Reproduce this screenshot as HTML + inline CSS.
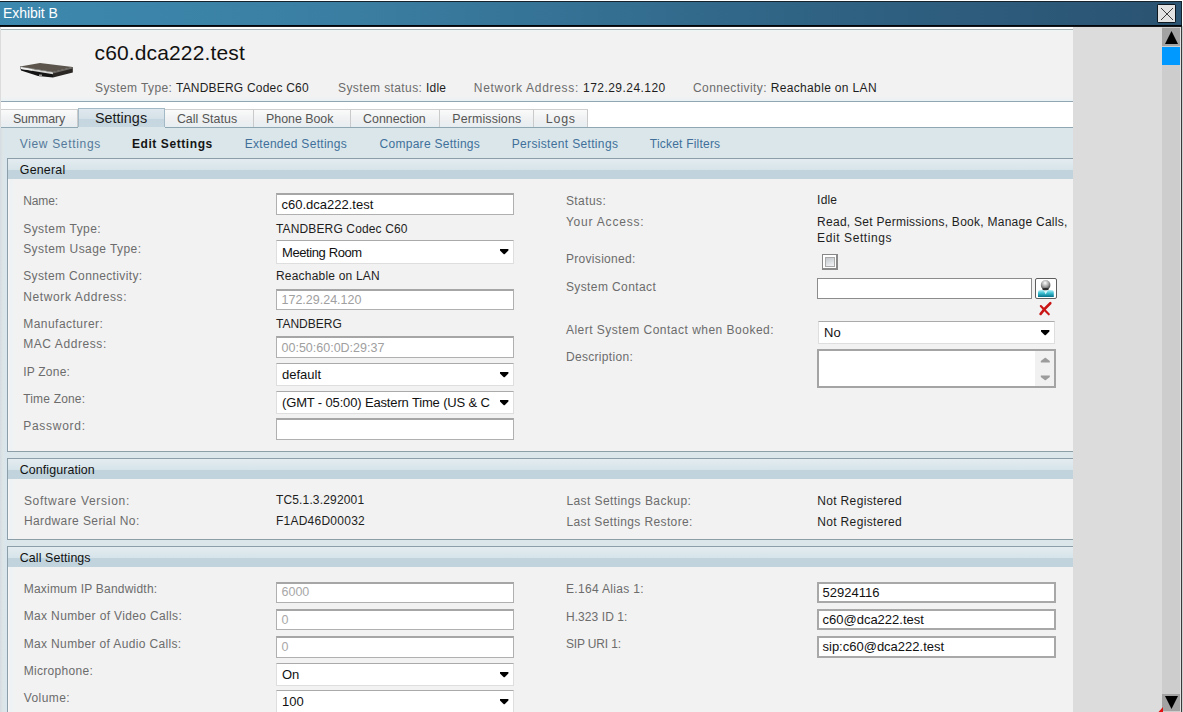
<!DOCTYPE html>
<html><head><meta charset="utf-8"><title>Exhibit B</title>
<style>
html,body{margin:0;padding:0;width:1183px;height:712px;overflow:hidden;background:#fff}
body{position:relative;font-family:'Liberation Sans', sans-serif}
.t{position:absolute;line-height:20px;white-space:nowrap;font-family:'Liberation Sans', sans-serif}
.r{position:absolute}
</style></head><body>
<div class="r" style="left:0px;top:0px;width:1183px;height:712px;background:#ffffff"></div>
<div class="r" style="left:0px;top:26px;width:1183px;height:686px;background:#dcdcdc"></div>
<div class="r" style="left:0px;top:1px;width:1182px;height:25px;background:#17232c"></div>
<div class="r" style="left:0px;top:2px;width:1181px;height:23px;background:linear-gradient(90deg,#3d88ae 0%,#3a7ea2 30%,#2f6283 70%,#2b5372 100%)"></div>
<div class="r" style="left:0px;top:25px;width:1182px;height:1px;background:#03070c"></div>
<div class="r" style="left:0px;top:26px;width:1182px;height:1px;background:#15191d"></div>
<div class="t" style="left:3.0px;top:3px;font-size:14px;color:#ffffff;letter-spacing:-0.05px;font-weight:normal;">Exhibit B</div>
<div class="r" style="left:1157px;top:4px;width:19px;height:19px;background:#0d1820;border-radius:2px"></div>
<div class="r" style="left:1158px;top:5px;width:17px;height:17px;background:#e3e3e3"></div>
<svg class="r" style="left:1158px;top:5px" width="17" height="17" viewBox="0 0 17 17"><path d="M3 3 L15 15 M15 3 L3 15" stroke="#2a2a2a" stroke-width="0.9"/></svg>
<div class="r" style="left:1181px;top:27px;width:1px;height:685px;background:#1a1a1a"></div>
<div class="r" style="left:1px;top:27px;width:1072px;height:2px;background:#ffffff"></div>
<div class="r" style="left:1px;top:29px;width:1072px;height:1px;background:#a9b2b4"></div>
<div class="r" style="left:1px;top:30px;width:1072px;height:71px;background:linear-gradient(#eef6f6 0px,#f2f2f2 2px,#f2f2f2 66px,#eaf2f4 71px)"></div>
<div class="r" style="left:1px;top:101px;width:1072px;height:1px;background:#91a6b2"></div>
<div class="r" style="left:1px;top:102px;width:1072px;height:25px;background:#ffffff"></div>
<svg class="r" style="left:18px;top:58px" width="58" height="24" viewBox="0 0 58 24">
<polygon points="2,8.5 35,14 35,19.5 20,18 3,12.5" fill="#141414"/>
<polygon points="35,14 54.8,9 54.8,14.5 35,19.5" fill="#2a2724"/>
<polygon points="2,8.5 22,5 54.8,9 35,14" fill="#5b554d"/>
<polygon points="2.5,9 35,14.3 35,16.2 3,11" fill="#d4d4d2"/>
<polygon points="2.5,9 14,11 14,12.5 3,11" fill="#f0f0f0"/>
<polygon points="35,14 54.8,9 54.8,10.5 35,15.5" fill="#6e6a66"/>
<rect x="21" y="16.5" width="3" height="2" fill="#9a9a9a"/>
</svg>
<div class="t" style="left:94.5px;top:43px;font-size:21px;color:#111;letter-spacing:0.14px;font-weight:normal;">c60.dca222.test</div>
<div class="t" style="left:95.0px;top:77.5px;font-size:12px;letter-spacing:0.4px;color:#6c6c6c">System Type: <span style="color:#1e1e1e;letter-spacing:0.2px">TANDBERG Codec C60</span></div>
<div class="t" style="left:338.0px;top:77.5px;font-size:12px;letter-spacing:0.4px;color:#6c6c6c">System status: <span style="color:#1e1e1e;letter-spacing:0.2px">Idle</span></div>
<div class="t" style="left:473.8px;top:77.5px;font-size:12px;letter-spacing:0.7px;color:#6c6c6c">Network Address: <span style="color:#1e1e1e;letter-spacing:0.45px">172.29.24.120</span></div>
<div class="t" style="left:693.0px;top:77.5px;font-size:12px;letter-spacing:0.4px;color:#6c6c6c">Connectivity: <span style="color:#1e1e1e;letter-spacing:0.35px">Reachable on LAN</span></div>
<div class="r" style="left:1px;top:109px;width:77px;height:18px;background:linear-gradient(#fafafa,#eef0f1 60%,#e6edf1);border-top:1px solid #cfcfcf;border-right:1px solid #cacaca;box-sizing:border-box"></div>
<div class="t" style="left:13.0px;top:109px;font-size:12.4px;color:#555;letter-spacing:-0.15px;font-weight:normal;">Summary</div>
<div class="r" style="left:165px;top:109px;width:89px;height:18px;background:linear-gradient(#fafafa,#eef0f1 60%,#e6edf1);border-top:1px solid #cfcfcf;border-right:1px solid #cacaca;box-sizing:border-box"></div>
<div class="t" style="left:176.9px;top:109px;font-size:12.4px;color:#555;letter-spacing:0.028px;font-weight:normal;">Call Status</div>
<div class="r" style="left:254px;top:109px;width:97px;height:18px;background:linear-gradient(#fafafa,#eef0f1 60%,#e6edf1);border-top:1px solid #cfcfcf;border-right:1px solid #cacaca;box-sizing:border-box"></div>
<div class="t" style="left:266.1px;top:109px;font-size:12.4px;color:#555;letter-spacing:-0.024px;font-weight:normal;">Phone Book</div>
<div class="r" style="left:351px;top:109px;width:89px;height:18px;background:linear-gradient(#fafafa,#eef0f1 60%,#e6edf1);border-top:1px solid #cfcfcf;border-right:1px solid #cacaca;box-sizing:border-box"></div>
<div class="t" style="left:363.1px;top:109px;font-size:12.4px;color:#555;letter-spacing:-0.01px;font-weight:normal;">Connection</div>
<div class="r" style="left:440px;top:109px;width:94px;height:18px;background:linear-gradient(#fafafa,#eef0f1 60%,#e6edf1);border-top:1px solid #cfcfcf;border-right:1px solid #cacaca;box-sizing:border-box"></div>
<div class="t" style="left:452.3px;top:109px;font-size:12.4px;color:#555;letter-spacing:0.132px;font-weight:normal;">Permissions</div>
<div class="r" style="left:534px;top:109px;width:54px;height:18px;background:linear-gradient(#fafafa,#eef0f1 60%,#e6edf1);border-top:1px solid #cfcfcf;border-right:1px solid #cacaca;box-sizing:border-box"></div>
<div class="t" style="left:545.8px;top:109px;font-size:12.4px;color:#555;letter-spacing:0.8px;font-weight:normal;">Logs</div>
<div class="r" style="left:78px;top:108px;width:87px;height:20px;background:linear-gradient(#dfe8ee 0%,#d5e1e8 50%,#c6d6e0 51%,#c8d8e1 100%);border:1px solid #a4b9c6;border-bottom:none;box-sizing:border-box"></div>
<div class="t" style="left:94.9px;top:108px;font-size:14.4px;color:#1a1a1a;letter-spacing:0.028px;font-weight:normal;">Settings</div>
<div class="r" style="left:0px;top:127px;width:1073px;height:585px;background:#dae6ea"></div>
<div class="r" style="left:0px;top:128px;width:7px;height:584px;background:linear-gradient(90deg,#d4dce2,#dde5e7 40%,#d8e6ee)"></div>
<div class="r" style="left:1px;top:127px;width:77px;height:1px;background:#8fa6b3"></div>
<div class="r" style="left:165px;top:127px;width:908px;height:1px;background:#8fa6b3"></div>
<div class="t" style="left:19.7px;top:134px;font-size:12px;color:#55799a;letter-spacing:0.676px;font-weight:normal;">View Settings</div>
<div class="t" style="left:131.9px;top:134px;font-size:12px;color:#151515;letter-spacing:0.586px;font-weight:bold;">Edit Settings</div>
<div class="t" style="left:244.7px;top:134px;font-size:12px;color:#40709a;letter-spacing:0.294px;font-weight:normal;">Extended Settings</div>
<div class="t" style="left:379.5px;top:134px;font-size:12px;color:#40709a;letter-spacing:0.284px;font-weight:normal;">Compare Settings</div>
<div class="t" style="left:511.7px;top:134px;font-size:12px;color:#40709a;letter-spacing:0.342px;font-weight:normal;">Persistent Settings</div>
<div class="t" style="left:649.8px;top:134px;font-size:12px;color:#40709a;letter-spacing:0.211px;font-weight:normal;">Ticket Filters</div>
<div class="r" style="left:7px;top:158px;width:1066px;height:1px;background:#8c9ea8"></div>
<div class="r" style="left:7px;top:158px;width:1px;height:294px;background:#8c9ea8"></div>
<div class="r" style="left:7px;top:451px;width:1066px;height:1px;background:#8c9ea8"></div>
<div class="r" style="left:8px;top:159px;width:1065px;height:11px;background:linear-gradient(#e4ecf0,#d6e4ea)"></div>
<div class="r" style="left:8px;top:170px;width:1065px;height:9px;background:#c1d4de"></div>
<div class="r" style="left:8px;top:179px;width:1065px;height:272px;background:linear-gradient(90deg,#f8f8f6 0px,#eef2f4 2px,#f2f2f2 8px)"></div>
<div class="t" style="left:19.8px;top:160px;font-size:12.4px;color:#111;letter-spacing:0.212px;font-weight:normal;">General</div>
<div class="r" style="left:7px;top:458px;width:1066px;height:1px;background:#8c9ea8"></div>
<div class="r" style="left:7px;top:458px;width:1px;height:82px;background:#8c9ea8"></div>
<div class="r" style="left:7px;top:539px;width:1066px;height:1px;background:#8c9ea8"></div>
<div class="r" style="left:8px;top:459px;width:1065px;height:11px;background:linear-gradient(#e4ecf0,#d6e4ea)"></div>
<div class="r" style="left:8px;top:470px;width:1065px;height:9px;background:#c1d4de"></div>
<div class="r" style="left:8px;top:479px;width:1065px;height:60px;background:linear-gradient(90deg,#f8f8f6 0px,#eef2f4 2px,#f2f2f2 8px)"></div>
<div class="t" style="left:19.8px;top:460px;font-size:12.4px;color:#111;letter-spacing:0.1px;font-weight:normal;">Configuration</div>
<div class="r" style="left:7px;top:546px;width:1066px;height:1px;background:#8c9ea8"></div>
<div class="r" style="left:7px;top:546px;width:1px;height:255px;background:#8c9ea8"></div>
<div class="r" style="left:7px;top:800px;width:1066px;height:1px;background:#8c9ea8"></div>
<div class="r" style="left:8px;top:547px;width:1065px;height:11px;background:linear-gradient(#e4ecf0,#d6e4ea)"></div>
<div class="r" style="left:8px;top:558px;width:1065px;height:9px;background:#c1d4de"></div>
<div class="r" style="left:8px;top:567px;width:1065px;height:233px;background:linear-gradient(90deg,#f8f8f6 0px,#eef2f4 2px,#f2f2f2 8px)"></div>
<div class="t" style="left:19.8px;top:548px;font-size:12.4px;color:#111;letter-spacing:0.1px;font-weight:normal;">Call Settings</div>
<div class="t" style="left:23.2px;top:190.7px;font-size:12px;color:#6c6c6c;letter-spacing:-0.127px;font-weight:normal;">Name:</div>
<div class="t" style="left:23.2px;top:218.8px;font-size:12px;color:#6c6c6c;letter-spacing:0.458px;font-weight:normal;">System Type:</div>
<div class="t" style="left:23.2px;top:238.6px;font-size:12px;color:#6c6c6c;letter-spacing:0.431px;font-weight:normal;">System Usage Type:</div>
<div class="t" style="left:23.2px;top:265.8px;font-size:12px;color:#6c6c6c;letter-spacing:0.363px;font-weight:normal;">System Connectivity:</div>
<div class="t" style="left:23.2px;top:286.6px;font-size:12px;color:#6c6c6c;letter-spacing:0.622px;font-weight:normal;">Network Address:</div>
<div class="t" style="left:23.2px;top:314.1px;font-size:12px;color:#6c6c6c;letter-spacing:0.475px;font-weight:normal;">Manufacturer:</div>
<div class="t" style="left:23.2px;top:334.2px;font-size:12px;color:#6c6c6c;letter-spacing:0.58px;font-weight:normal;">MAC Address:</div>
<div class="t" style="left:23.2px;top:361.5px;font-size:12px;color:#6c6c6c;letter-spacing:0.225px;font-weight:normal;">IP Zone:</div>
<div class="t" style="left:23.2px;top:388.6px;font-size:12px;color:#6c6c6c;letter-spacing:0.177px;font-weight:normal;">Time Zone:</div>
<div class="t" style="left:23.2px;top:416.1px;font-size:12px;color:#6c6c6c;letter-spacing:0.727px;font-weight:normal;">Password:</div>
<div class="r" style="left:276px;top:193px;width:238px;height:22px;background:#fff;border:1px solid #b0b0b0;border-top:2px solid #a6a6a6;box-sizing:border-box"></div>
<div class="t" style="left:281.5px;top:194.8px;font-size:13px;color:#111;letter-spacing:0px;font-weight:normal;">c60.dca222.test</div>
<div class="t" style="left:276.0px;top:218.9px;font-size:12px;color:#1e1e1e;letter-spacing:0.137px;font-weight:normal;">TANDBERG Codec C60</div>
<div class="r" style="left:276px;top:240px;width:238px;height:24px;background:#fff;border:1px solid #dedede;border-top:1px solid #aaaaaa;box-sizing:border-box"></div>
<div class="t" style="left:282px;top:243px;font-size:13px;letter-spacing:-0.4px;color:#111;width:208px;overflow:hidden;white-space:nowrap">Meeting Room</div>
<svg class="r" style="left:500px;top:249px" width="9" height="6" viewBox="0 0 9 6"><polygon points="0,0 8.4,0 8.4,1.6 4.6,5.3 3.8,5.3 0,1.6" fill="#000"/></svg>
<div class="t" style="left:276.0px;top:265.5px;font-size:12px;color:#1e1e1e;letter-spacing:0.2px;font-weight:normal;">Reachable on LAN</div>
<div class="r" style="left:276px;top:289px;width:238px;height:21px;background:#fff;border:1px solid #b0b0b0;border-top:2px solid #a6a6a6;box-sizing:border-box"></div>
<div class="t" style="left:281.5px;top:289.7px;font-size:12.5px;color:#a0a0a0;letter-spacing:0px;font-weight:normal;">172.29.24.120</div>
<div class="t" style="left:276.0px;top:313.6px;font-size:12px;color:#1e1e1e;letter-spacing:0px;font-weight:normal;">TANDBERG</div>
<div class="r" style="left:276px;top:336px;width:238px;height:22px;background:#fff;border:1px solid #b0b0b0;border-top:2px solid #a6a6a6;box-sizing:border-box"></div>
<div class="t" style="left:281.5px;top:337.8px;font-size:12.5px;color:#a0a0a0;letter-spacing:0px;font-weight:normal;">00:50:60:0D:29:37</div>
<div class="r" style="left:276px;top:363px;width:238px;height:23px;background:#fff;border:1px solid #dedede;border-top:1px solid #aaaaaa;box-sizing:border-box"></div>
<div class="t" style="left:282px;top:364.6px;font-size:13px;letter-spacing:0px;color:#111;width:208px;overflow:hidden;white-space:nowrap">default</div>
<svg class="r" style="left:500px;top:372px" width="9" height="6" viewBox="0 0 9 6"><polygon points="0,0 8.4,0 8.4,1.6 4.6,5.3 3.8,5.3 0,1.6" fill="#000"/></svg>
<div class="r" style="left:276px;top:391px;width:238px;height:23px;background:#fff;border:1px solid #dedede;border-top:1px solid #aaaaaa;box-sizing:border-box"></div>
<div class="t" style="left:282px;top:392.7px;font-size:13px;letter-spacing:-0.15px;color:#111;width:208px;overflow:hidden;white-space:nowrap">(GMT - 05:00) Eastern Time (US &amp; Canada)</div>
<svg class="r" style="left:500px;top:400px" width="9" height="6" viewBox="0 0 9 6"><polygon points="0,0 8.4,0 8.4,1.6 4.6,5.3 3.8,5.3 0,1.6" fill="#000"/></svg>
<div class="r" style="left:276px;top:418px;width:238px;height:22px;background:#fff;border:1px solid #b0b0b0;border-top:2px solid #a6a6a6;box-sizing:border-box"></div>
<div class="t" style="left:565.9px;top:191.2px;font-size:12px;color:#6c6c6c;letter-spacing:0.413px;font-weight:normal;">Status:</div>
<div class="t" style="left:565.9px;top:211.7px;font-size:12px;color:#6c6c6c;letter-spacing:0.8px;font-weight:normal;">Your Access:</div>
<div class="t" style="left:565.9px;top:249px;font-size:12px;color:#6c6c6c;letter-spacing:0.318px;font-weight:normal;">Provisioned:</div>
<div class="t" style="left:565.9px;top:276.9px;font-size:12px;color:#6c6c6c;letter-spacing:0.395px;font-weight:normal;">System Contact</div>
<div class="t" style="left:565.9px;top:319.7px;font-size:12px;color:#6c6c6c;letter-spacing:0.486px;font-weight:normal;">Alert System Contact when Booked:</div>
<div class="t" style="left:565.9px;top:346.5px;font-size:12px;color:#6c6c6c;letter-spacing:0.325px;font-weight:normal;">Description:</div>
<div class="t" style="left:817.1px;top:190.4px;font-size:12px;color:#1e1e1e;letter-spacing:0.2px;font-weight:normal;">Idle</div>
<div class="t" style="left:817.1px;top:211.6px;font-size:12px;color:#1e1e1e;letter-spacing:0.263px;font-weight:normal;">Read, Set Permissions, Book, Manage Calls,</div>
<div class="t" style="left:817.1px;top:227.6px;font-size:12px;color:#1e1e1e;letter-spacing:0.586px;font-weight:normal;">Edit Settings</div>
<div class="r" style="left:822px;top:254px;width:16px;height:16px;background:#fff;border:1px solid #878787;border-right:2px solid #8a8a8a;border-bottom:2px solid #8a8a8a;box-sizing:border-box"></div>
<div class="r" style="left:825px;top:257px;width:10px;height:10px;background:linear-gradient(160deg,#c4c8cc,#f2f4f6);border:1px solid #a9a9a9;box-sizing:border-box"></div>
<div class="r" style="left:817px;top:278px;width:215px;height:21px;background:#fff;border:1px solid #8c8c8c;box-sizing:border-box"></div>
<div class="r" style="left:1035px;top:278px;width:22px;height:21px;background:#fff;border:1px solid #5e5e5e;border-radius:2px;box-sizing:border-box"></div>
<svg class="r" style="left:1036px;top:279px" width="20" height="19" viewBox="0 0 20 19">
<defs><radialGradient id="hg" cx="0.45" cy="0.3" r="0.65"><stop offset="0" stop-color="#ffffff"/><stop offset="0.55" stop-color="#a8a8a8"/><stop offset="1" stop-color="#4a4a4a"/></radialGradient>
<linearGradient id="bg" x1="0" y1="0" x2="0" y2="1"><stop offset="0" stop-color="#b4f0f8"/><stop offset="0.45" stop-color="#3cbfd2"/><stop offset="1" stop-color="#06708a"/></linearGradient></defs>
<path d="M2 18 L2 13 Q2 11 4.5 11 L15 11 Q17.8 11 17.8 13 L17.8 18 Z" fill="url(#bg)"/>
<path d="M7.5 11 L9.7 15.5 L12 11 Z" fill="#d8f6fa"/>
<ellipse cx="9.6" cy="6" rx="4.8" ry="5" fill="url(#hg)"/>
<ellipse cx="9.6" cy="10.2" rx="3.2" ry="1.1" fill="#2a2a2a"/>
</svg>
<svg class="r" style="left:1037px;top:300px" width="16" height="18" viewBox="0 0 16 18">
<path d="M3.6 14 Q7.5 8.5 13.3 3.2" stroke="#c81414" stroke-width="2.6" fill="none" stroke-linecap="round"/>
<path d="M3.8 6 Q7.5 10 11.8 14.3" stroke="#cc1616" stroke-width="2.1" fill="none" stroke-linecap="round"/>
</svg>
<div class="r" style="left:818px;top:321px;width:237px;height:23px;background:#fff;border:1px solid #dedede;border-top:1px solid #aaaaaa;box-sizing:border-box"></div>
<div class="t" style="left:824px;top:323px;font-size:13px;letter-spacing:0px;color:#111;width:207px;overflow:hidden;white-space:nowrap">No</div>
<svg class="r" style="left:1041px;top:330px" width="9" height="6" viewBox="0 0 9 6"><polygon points="0,0 8.4,0 8.4,1.6 4.6,5.3 3.8,5.3 0,1.6" fill="#000"/></svg>
<div class="r" style="left:817px;top:349px;width:239px;height:39px;background:#fff;border:2px solid #a4a4a4;box-sizing:border-box"></div>
<div class="r" style="left:1035px;top:351px;width:19px;height:35px;background:#f1f1f1"></div>
<svg class="r" style="left:1040px;top:357px" width="11" height="24" viewBox="0 0 11 24"><polygon points="0.8,5.5 9.8,5.5 9.8,4 5.6,0.8 5,0.8 0.8,4" fill="#9c9c9c"/><polygon points="0.8,18.5 9.8,18.5 9.8,20 5.6,23.2 5,23.2 0.8,20" fill="#9c9c9c"/></svg>
<div class="t" style="left:23.9px;top:490.9px;font-size:12px;color:#6c6c6c;letter-spacing:0.705px;font-weight:normal;">Software Version:</div>
<div class="t" style="left:23.9px;top:511px;font-size:12px;color:#6c6c6c;letter-spacing:0.405px;font-weight:normal;">Hardware Serial No:</div>
<div class="t" style="left:275.9px;top:490.4px;font-size:12px;color:#1e1e1e;letter-spacing:0.162px;font-weight:normal;">TC5.1.3.292001</div>
<div class="t" style="left:275.9px;top:510.79999999999995px;font-size:12px;color:#1e1e1e;letter-spacing:0.256px;font-weight:normal;">F1AD46D00032</div>
<div class="t" style="left:566.4px;top:491.3px;font-size:12px;color:#6c6c6c;letter-spacing:0.418px;font-weight:normal;">Last Settings Backup:</div>
<div class="t" style="left:566.4px;top:511.70000000000005px;font-size:12px;color:#6c6c6c;letter-spacing:0.38px;font-weight:normal;">Last Settings Restore:</div>
<div class="t" style="left:817.2px;top:491.3px;font-size:12px;color:#1e1e1e;letter-spacing:0.349px;font-weight:normal;">Not Registered</div>
<div class="t" style="left:817.2px;top:511.70000000000005px;font-size:12px;color:#1e1e1e;letter-spacing:0.349px;font-weight:normal;">Not Registered</div>
<div class="t" style="left:23.7px;top:578.7px;font-size:12px;color:#6c6c6c;letter-spacing:0.213px;font-weight:normal;">Maximum IP Bandwidth:</div>
<div class="t" style="left:23.7px;top:606.2px;font-size:12px;color:#6c6c6c;letter-spacing:0.358px;font-weight:normal;">Max Number of Video Calls:</div>
<div class="t" style="left:23.7px;top:633.5px;font-size:12px;color:#6c6c6c;letter-spacing:0.35px;font-weight:normal;">Max Number of Audio Calls:</div>
<div class="t" style="left:23.7px;top:661.3px;font-size:12px;color:#6c6c6c;letter-spacing:0.31px;font-weight:normal;">Microphone:</div>
<div class="t" style="left:23.7px;top:688.3px;font-size:12px;color:#6c6c6c;letter-spacing:0.429px;font-weight:normal;">Volume:</div>
<div class="r" style="left:276px;top:582px;width:238px;height:21px;background:#fff;border:1px solid #b0b0b0;border-top:2px solid #a6a6a6;box-sizing:border-box"></div>
<div class="t" style="left:281.5px;top:582.4px;font-size:12.5px;color:#a8a8a8;letter-spacing:0px;font-weight:normal;">6000</div>
<div class="r" style="left:276px;top:609px;width:238px;height:21px;background:#fff;border:1px solid #b0b0b0;border-top:2px solid #a6a6a6;box-sizing:border-box"></div>
<div class="t" style="left:281.5px;top:609.8px;font-size:12.5px;color:#a8a8a8;letter-spacing:0px;font-weight:normal;">0</div>
<div class="r" style="left:276px;top:636px;width:238px;height:22px;background:#fff;border:1px solid #b0b0b0;border-top:2px solid #a6a6a6;box-sizing:border-box"></div>
<div class="t" style="left:281.5px;top:637.3px;font-size:12.5px;color:#a8a8a8;letter-spacing:0px;font-weight:normal;">0</div>
<div class="r" style="left:276px;top:663px;width:238px;height:23px;background:#fff;border:1px solid #dedede;border-top:1px solid #aaaaaa;box-sizing:border-box"></div>
<div class="t" style="left:282px;top:664.8px;font-size:13px;letter-spacing:0px;color:#111;width:208px;overflow:hidden;white-space:nowrap">On</div>
<svg class="r" style="left:500px;top:672px" width="9" height="6" viewBox="0 0 9 6"><polygon points="0,0 8.4,0 8.4,1.6 4.6,5.3 3.8,5.3 0,1.6" fill="#000"/></svg>
<div class="r" style="left:276px;top:690px;width:238px;height:23px;background:#fff;border:1px solid #dedede;border-top:1px solid #aaaaaa;box-sizing:border-box"></div>
<div class="t" style="left:282px;top:692.3px;font-size:13px;letter-spacing:0px;color:#111;width:208px;overflow:hidden;white-space:nowrap">100</div>
<svg class="r" style="left:500px;top:699px" width="9" height="6" viewBox="0 0 9 6"><polygon points="0,0 8.4,0 8.4,1.6 4.6,5.3 3.8,5.3 0,1.6" fill="#000"/></svg>
<div class="t" style="left:565.9px;top:578.8px;font-size:12px;color:#6c6c6c;letter-spacing:0.338px;font-weight:normal;">E.164 Alias 1:</div>
<div class="t" style="left:565.9px;top:606.7px;font-size:12px;color:#6c6c6c;letter-spacing:0.084px;font-weight:normal;">H.323 ID 1:</div>
<div class="t" style="left:565.9px;top:633.6px;font-size:12px;color:#6c6c6c;letter-spacing:-0.15px;font-weight:normal;">SIP URI 1:</div>
<div class="r" style="left:817px;top:582px;width:239px;height:21px;background:#fff;border:2px solid #a8a8a8;box-sizing:border-box"></div>
<div class="t" style="left:822.5px;top:582.9px;font-size:13px;color:#111;letter-spacing:0px;font-weight:normal;">52924116</div>
<div class="r" style="left:817px;top:609px;width:239px;height:21px;background:#fff;border:2px solid #a8a8a8;box-sizing:border-box"></div>
<div class="t" style="left:822.5px;top:609.6px;font-size:13px;color:#111;letter-spacing:0px;font-weight:normal;">c60@dca222.test</div>
<div class="r" style="left:817px;top:636px;width:239px;height:22px;background:#fff;border:2px solid #a8a8a8;box-sizing:border-box"></div>
<div class="t" style="left:822.5px;top:637px;font-size:13px;color:#111;letter-spacing:0px;font-weight:normal;">sip:c60@dca222.test</div>
<div class="r" style="left:1073px;top:27px;width:89px;height:685px;background:#dcdcdc"></div>
<div class="r" style="left:1162px;top:27px;width:18px;height:685px;background:#cdcdcd"></div>
<div class="r" style="left:1180px;top:27px;width:1px;height:685px;background:#e0e0e0"></div>
<div class="r" style="left:1181px;top:27px;width:1px;height:685px;background:#3a3a3a"></div>
<div class="r" style="left:1182px;top:27px;width:1px;height:685px;background:#d0d0d0"></div>
<div class="r" style="left:1162px;top:28px;width:18px;height:18px;background:#a2a2a2"></div>
<svg class="r" style="left:1162px;top:28px" width="19" height="18" viewBox="0 0 19 18"><polygon points="9.5,3 16,16 3,16" fill="#000"/></svg>
<div class="r" style="left:1162px;top:47px;width:18px;height:18px;background:#0099ff"></div>
<div class="r" style="left:1162px;top:694px;width:18px;height:17px;background:#a2a2a2"></div>
<svg class="r" style="left:1162px;top:694px" width="19" height="17" viewBox="0 0 19 17"><polygon points="3,2 16,2 9.5,15" fill="#000"/></svg>
<svg class="r" style="left:1158px;top:707px" width="5" height="5" viewBox="0 0 5 5"><polygon points="5,0 5,5 0.5,5" fill="#e01010"/></svg>
</body></html>
